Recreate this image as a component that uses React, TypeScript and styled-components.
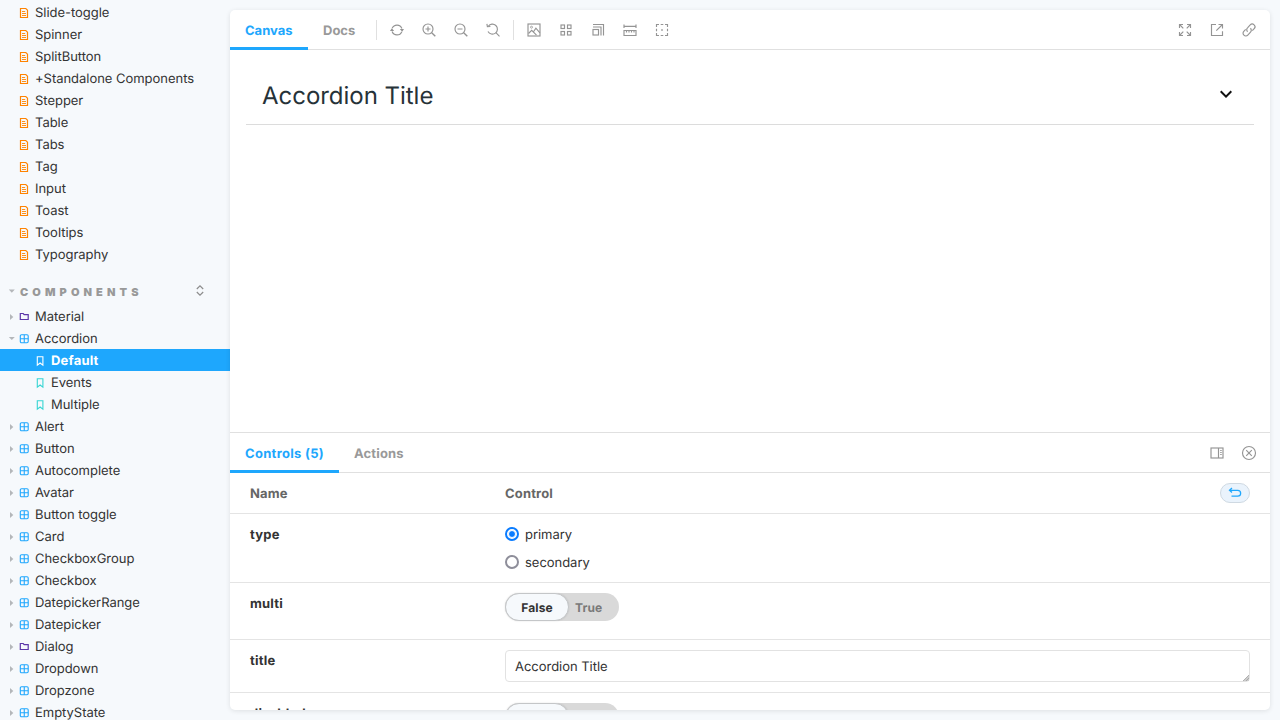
import React from 'react';
import styled, { createGlobalStyle, css } from 'styled-components';

const Global = createGlobalStyle`
  *, *::before, *::after { box-sizing: border-box; }
  body {
    margin: 0;
    background: #f6f9fc;
    color: #333;
    font-family: Inter, "Liberation Sans", sans-serif;
    font-size: 13px;
    letter-spacing: -0.03px;
    overflow: hidden;
    text-rendering: geometricPrecision;
    -webkit-font-smoothing: antialiased;
  }
`;

const Page = styled.div`
  display: flex;
  width: 1280px;
  height: 720px;
  overflow: hidden;
`;

const Sidebar = styled.nav`
  width: 230px;
  flex: none;
  padding-top: 1px;
  overflow: hidden;
`;

const Item = styled.div<{ $leaf?: boolean; $selected?: boolean }>`
  display: flex;
  align-items: center;
  height: 22px;
  padding-top: 2px;
  padding-left: ${p => (p.$leaf ? 35 : 8)}px;
  white-space: nowrap;
  line-height: 20px;
  ${p => p.$selected && css`
    background: #1ea7fd;
    color: #fff;
    font-weight: 700;
    letter-spacing: 0.2px;
  `}
`;

const Caret = styled.svg`
  width: 8px;
  height: 8px;
  flex: none;
  margin-right: 3px;
  fill: #b4b7ba;
`;

const NodeIcon = styled.svg`
  width: 10px;
  height: 12px;
  flex: none;
  margin-right: 6px;
  fill: none;
  stroke: currentColor;
`;

const Heading = styled.div`
  display: flex;
  align-items: center;
  height: 40px;
  padding: 13px 25px 0 8px;
  color: #999;
  font-size: 11px;
  font-weight: 900;
  letter-spacing: 4.1px;
`;

const HeadingText = styled.span`
  flex: 1;
  margin-left: 1px;
`;

const ExpandIcon = styled.svg`
  width: 10px;
  height: 12px;
  margin-bottom: 1px;
  fill: none;
  stroke: #8c8c8c;
  stroke-width: 1.2;
`;

const Main = styled.main`
  display: flex;
  flex-direction: column;
  width: 1040px;
  height: 700px;
  margin-top: 10px;
  background: #fff;
  border-radius: 5px;
  overflow: hidden;
  box-shadow: 0 1px 5px 0 rgba(0, 0, 0, 0.1);
`;

const Bar = styled.div`
  display: flex;
  align-items: center;
  flex: none;
  height: 40px;
  padding-right: 7px;
  border-bottom: 1px solid #e0e0e0;
`;

const Tab = styled.div<{ $active?: boolean; $width: number; $spacing?: number }>`
  height: 40px;
  width: ${p => p.$width}px;
  align-self: flex-start;
  padding: 4px 0 0 15px;
  border-bottom: 3px solid ${p => (p.$active ? '#1ea7fd' : 'transparent')};
  color: ${p => (p.$active ? '#1ea7fd' : '#999')};
  font-weight: 700;
  letter-spacing: ${p => p.$spacing ?? 0}px;
  line-height: 35px;
  white-space: nowrap;
`;

const Separator = styled.span`
  width: 1px;
  height: 20px;
  margin: 0 6px;
  background: #e0e0e0;
`;

const Tools = styled.div<{ $end?: boolean }>`
  display: flex;
  gap: 4px;
  margin-left: ${p => (p.$end ? 'auto' : '0')};
`;

const ToolButton = styled.span`
  display: flex;
  align-items: center;
  justify-content: center;
  width: 28px;
  height: 28px;
  svg {
    width: 14px;
    height: 14px;
    fill: none;
    stroke: #949494;
    stroke-width: 1.15;
  }
`;

const Preview = styled.section`
  height: 382px;
  flex: none;
  padding: 16px;
`;

const Accordion = styled.div`
  display: flex;
  align-items: center;
  justify-content: space-between;
  height: 59px;
  padding: 0 16px;
  border-bottom: 1px solid #dcdcdc;
  color: #263238;
  font-size: 24px;
  svg { width: 24px; height: 24px; fill: #111; margin-bottom: 2px; }
`;

const Panel = styled.section`
  flex: 1;
  min-height: 0;
  border-top: 1px solid #e0e0e0;
  overflow: hidden;
`;

const Row = styled.div<{ $height: number; $head?: boolean }>`
  display: grid;
  grid-template-columns: 255px 1fr auto;
  height: ${p => p.$height}px;
  padding: 10px 20px 0;
  border-bottom: 1px solid #e4e4e4;
  line-height: 22px;
  color: ${p => (p.$head ? '#666' : '#333')};
  font-weight: ${p => (p.$head ? 700 : 400)};
  letter-spacing: ${p => (p.$head ? '0.15px' : 'inherit')};
`;

const Name = styled.span`
  font-weight: 700;
  letter-spacing: 0.2px;
`;

const Reset = styled.span`
  display: flex;
  align-items: center;
  justify-content: center;
  width: 30px;
  height: 20px;
  border: 1px solid #cfd9e2;
  border-radius: 10px;
  background: #eaf3fc;
  svg { width: 14px; height: 14px; fill: none; stroke: #1ea7fd; stroke-width: 1.3; }
`;

const Options = styled.div`
  display: flex;
  flex-direction: column;
  gap: 8px;
`;

const Option = styled.label`
  display: flex;
  align-items: center;
  height: 20px;
  padding-top: 2px;
  line-height: 18px;
  gap: 6px;
`;

const Radio = styled.span<{ $on?: boolean }>`
  display: flex;
  align-items: center;
  justify-content: center;
  width: 14px;
  height: 14px;
  margin-bottom: 2px;
  border: 2px solid ${p => (p.$on ? '#0a7cff' : '#8e8e9a')};
  border-radius: 50%;
  background: #fff;
  &::after {
    content: '';
    width: 8px;
    height: 8px;
    flex: none;
    border: 1px solid #fff;
    border-radius: 50%;
    background: ${p => (p.$on ? '#0a7cff' : 'transparent')};
  }
`;

const Toggle = styled.span`
  display: flex;
  width: 114px;
  height: 28px;
  border-radius: 14px;
  background: #d9d9d9;
  font-size: 12px;
  font-weight: 700;
  letter-spacing: 0.1px;
  line-height: 29px;
  color: #7a7a7a;
`;

const ToggleOn = styled.span`
  width: 64px;
  margin-right: 6px;
  border: 1px solid #c4c6c8;
  border-radius: 14px;
  background: #f6f9fc;
  color: #333;
  line-height: 27px;
  text-align: center;
  box-shadow: 0 0 2px rgba(0, 0, 0, 0.12);
`;

const Field = styled.div`
  display: flex;
  align-items: flex-end;
  justify-content: space-between;
  grid-column: 2 / 4;
  height: 32px;
  padding-left: 9px;
  border: 1px solid #e2e2e2;
  border-radius: 4px;
  line-height: 28px;
  svg { width: 6px; height: 6px; stroke: #999; fill: #ccc; }
`;

type Kind = 'doc' | 'folder' | 'component' | 'story';

const colors: Record<Kind, string> = {
  doc: '#ff8300',
  folder: '#5b36a8',
  component: '#1ea7fd',
  story: '#37d5d3',
};

const shapes: Record<Kind, React.ReactNode> = {
  doc: <><path d="M1.500 1.500h5.300L8.500 3.200v7.300h-7z" strokeWidth="1.200" /><path d="M3 4.500h3.200M3 6.500h4M3 8.500h4" strokeWidth=".9" /></>,
  folder: <path d="M1.300 2.500h2.900l1 1.200h4V8.500H1.300z" strokeWidth="1.200" />,
  component: <><rect x="1.300" y="1.800" width="7.900" height="7.900" rx="1.200" strokeWidth="1.100" /><path d="M5.250 2v7.700M1.300 5.750h7.900" strokeWidth="1.100" /></>,
  story: <path d="M2.300 1.700h5.600v8.500L5.100 8l-2.800 2.200z" strokeWidth="1.100" />,
};

const Glyph = ({ kind, color }: { kind: Kind; color?: string }) => (
  <NodeIcon viewBox="0 0 10 12" color={color || colors[kind]}>{shapes[kind]}</NodeIcon>
);

const Arrow = ({ open }: { open?: boolean }) => (
  <Caret viewBox="0 0 8 8"><path d={open ? 'M.8 2h6L3.800 5z' : 'M2 1v6L5.300 4z'} /></Caret>
);

const docs = ['Slide-toggle', 'Spinner', 'SplitButton', '+Standalone Components', 'Stepper', 'Table', 'Tabs', 'Tag', 'Input', 'Toast', 'Tooltips', 'Typography'];
const components = ['Alert', 'Button', 'Autocomplete', 'Avatar', 'Button toggle', 'Card', 'CheckboxGroup', 'Checkbox', 'DatepickerRange', 'Datepicker', 'Dialog', 'Dropdown', 'Dropzone', 'EmptyState'];

const DocItem = styled(Item)`
  padding-left: 19px;
`;

const lens = <><circle cx="6" cy="6" r="5" /><path d="M9.700 9.700l3.600 3.600" strokeWidth="1.4" /></>;

const zoomTools = [
  <><path d="M2.200 5.300a5.200 5.200 0 0 1 9.700.2M11.800 8.700a5.200 5.200 0 0 1-9.700-.2" /><path d="M0 7.900l1.800-2.700 2.400 2.700zM9.800 6.100h4.200l-1.800 2.700z" fill="#949494" stroke="none" /></>,
  <>{lens}<path d="M6 3.500v5M3.500 6h5" /></>,
  <>{lens}<path d="M3.500 6h5" /></>,
  <><path d="M2.300 3.300A5 5 0 1 1 2 8.500M9.900 9.700l3.600 3.600" /><path d="M.9.8l.5 2.900 3-.2" /></>,
];

const viewTools = [
  <><rect x="1" y="1" width="12" height="12" /><circle cx="4.500" cy="4.200" r="1" strokeWidth=".8" /><path d="M1.500 10.500l3.200-3.200 4.800 4.800M6.500 8.800l2.400-3.600 4 4.600" /></>,
  <><rect x="2" y="2" width="3.500" height="3.500" /><rect x="8.500" y="2" width="3.500" height="3.500" /><rect x="2" y="8.500" width="3.500" height="3.500" /><rect x="8.500" y="8.500" width="3.500" height="3.500" /></>,
  <><rect x="2" y="6.500" width="5.500" height="5.500" /><path d="M2 4h8v8.500M2 1.500h10.500v11" /></>,
  <><path d="M1 3.300h12M1 1.500v3.500M13 1.500v3.500M1 7.500h12v5H1zM3.500 7.500v2M6 7.500v2M8.500 7.500v2M11 7.500v2" /></>,
  <><path d="M1.500 4V1.500H4M10 1.500h2.500V4M12.500 10v2.500H10M4 12.500H1.500V10M5.700 1.500h2.600M5.700 12.500h2.600M1.500 5.700v2.600M12.500 5.700v2.600" /><path d="M6.200 7h1.600" strokeWidth="1.6" /></>,
];

const endTools = [
  <path d="M1.500 5V1.500H5M1.500 1.500L5.300 5.300M9 1.500h3.500V5M12.500 1.500L8.700 5.300M12.500 9v3.500H9M12.500 12.500L8.700 8.700M5 12.500H1.500V9M1.500 12.500l3.800-3.800" />,
  <path d="M6 1.500H1.500v11h11V8.300M8.500 1.500h4V5.500M12.500 1.500L6.300 7.700" />,
  <><path d="M5.600 8.700a2.700 2.700 0 0 1-.1-3.900l2.700-2.900a2.700 2.700 0 0 1 4 3.800l-1.900 2" /><path d="M8.400 5.300a2.700 2.700 0 0 1 .1 3.900l-2.700 2.900a2.700 2.700 0 0 1-4-3.800l1.900-2" /></>,
];

const panelTools = [
  <><rect x="1" y="2" width="12" height="10" /><path d="M8.500 2v10" /><path d="M10.200 4.500h1.500M10.200 6.500h1.500M10.200 8.500h1.500" /></>,
  <><circle cx="7" cy="7" r="6.500" /><path d="M4.200 4.200l5.600 5.600M9.800 4.200L4.200 9.800" /></>,
];

const Icons = ({ items, end }: { items: React.ReactNode[]; end?: boolean }) => (
  <Tools $end={end}>
    {items.map((icon, i) => (
      <ToolButton key={i}><svg viewBox="0 0 14 14" overflow="visible">{icon}</svg></ToolButton>
    ))}
  </Tools>
);

const BooleanControl = () => <Toggle><ToggleOn>False</ToggleOn>True</Toggle>;

export default function App() {
  return (
    <>
      <Global />
      <Page>
        <Sidebar>
          {docs.map(name => <DocItem key={name}><Glyph kind="doc" />{name}</DocItem>)}
          <Heading>
            <Caret viewBox="0 0 8 8"><path d="M.8 1.500h6L3.800 4.700z" /></Caret>
            <HeadingText>COMPONENTS</HeadingText>
            <ExpandIcon viewBox="0 0 10 12"><path d="M1.800 4L5 .9 8.200 4M1.800 7L5 10.100 8.200 7" /></ExpandIcon>
          </Heading>
          <Item><Arrow /><Glyph kind="folder" />Material</Item>
          <Item><Arrow open /><Glyph kind="component" />Accordion</Item>
          <Item $leaf $selected><Glyph kind="story" color="#fff" />Default</Item>
          <Item $leaf><Glyph kind="story" />Events</Item>
          <Item $leaf><Glyph kind="story" />Multiple</Item>
          {components.map(name => (
            <Item key={name}><Arrow /><Glyph kind={name === 'Dialog' ? 'folder' : 'component'} />{name}</Item>
          ))}
        </Sidebar>
        <Main>
          <Bar>
            <Tab $active $width={78}>Canvas</Tab>
            <Tab $width={62}>Docs</Tab>
            <Separator />
            <Icons items={zoomTools} />
            <Separator />
            <Icons items={viewTools} />
            <Icons items={endTools} end />
          </Bar>
          <Preview>
            <Accordion>
              Accordion Title
              <svg viewBox="0 0 24 24"><path d="M16.590 8.590L12 13.170 7.410 8.590 6 10l6 6 6-6z" /></svg>
            </Accordion>
          </Preview>
          <Panel>
            <Bar>
              <Tab $active $width={109} $spacing={0.3}>Controls (5)</Tab>
              <Tab $width={80} $spacing={0.15}>Actions</Tab>
              <Icons items={panelTools} end />
            </Bar>
            <Row $height={41} $head>
              <span>Name</span>
              <span>Control</span>
              <Reset><svg viewBox="0 0 14 14"><path d="M4 2L1.500 4.300 4 6.600M1.500 4.300h8.200a2.900 2.900 0 0 1 0 5.900H3.500" /></svg></Reset>
            </Row>
            <Row $height={69}>
              <Name>type</Name>
              <Options>
                <Option><Radio $on />primary</Option>
                <Option><Radio />secondary</Option>
              </Options>
            </Row>
            <Row $height={57}><Name>multi</Name><BooleanControl /></Row>
            <Row $height={53}>
              <Name>title</Name>
              <Field>Accordion Title<svg viewBox="0 0 7 7"><path d="M0 7l7-7v7z" stroke="none" /><path d="M0 7l7-7M3.500 7L7 3.500" strokeWidth=".8" /></svg></Field>
            </Row>
            <Row $height={57}><Name>disabled</Name><BooleanControl /></Row>
          </Panel>
        </Main>
      </Page>
    </>
  );
}
